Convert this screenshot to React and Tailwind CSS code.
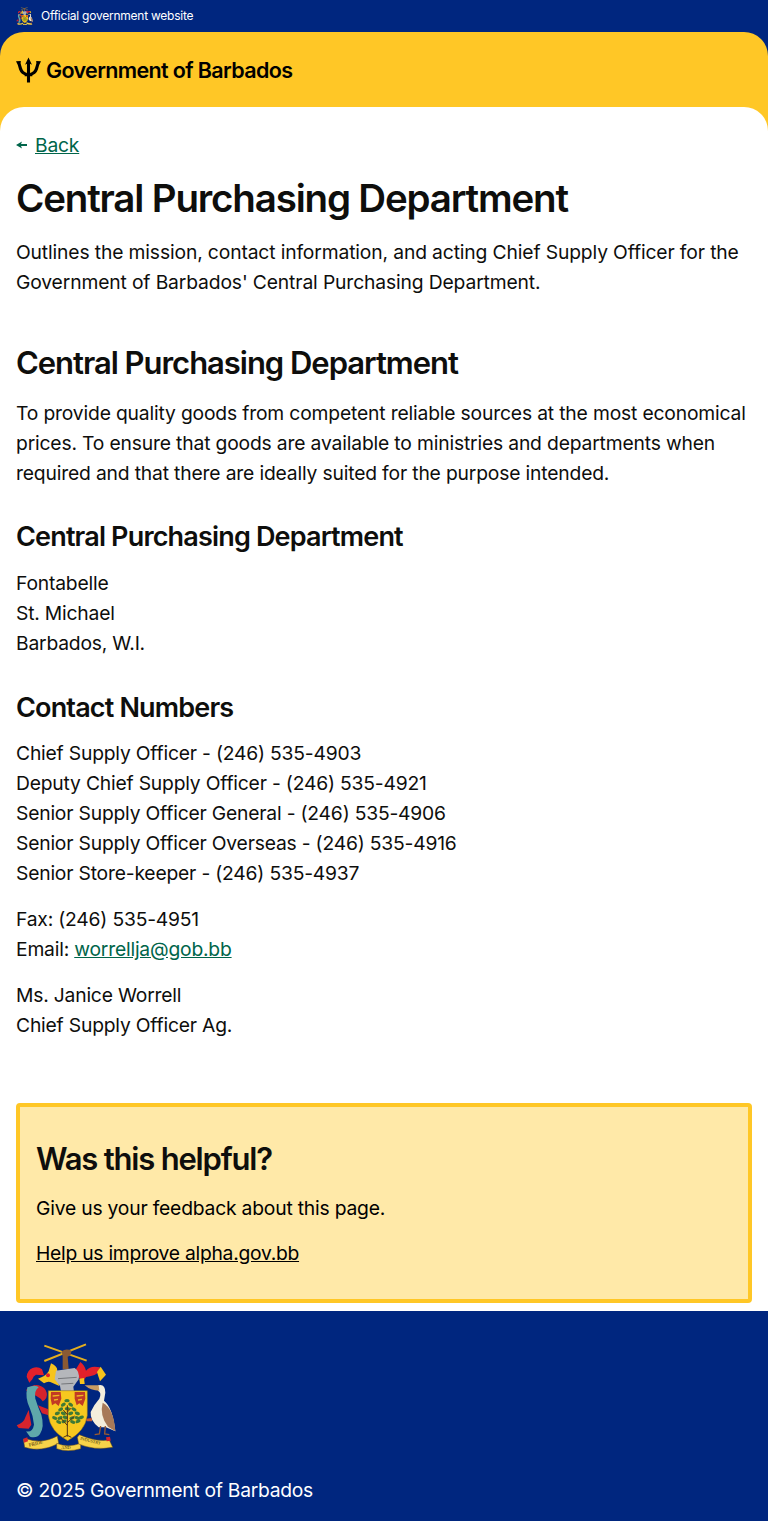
import React from 'react';

const font = "font-['Inter','Noto_Sans',sans-serif]";

// leaf clusters of the fig tree on the shield
const leaves = [
    [203, 212, 0], [192, 224, -35], [214, 224, 35], [184, 238, -30], [204, 236, 0], [224, 238, 30],
    [174, 250, -20], [192, 250, 20], [214, 250, -20], [234, 250, 20], [166, 264, 20], [182, 264, -20],
    [198, 262, 15], [218, 264, -15], [234, 264, 20], [246, 262, -20], [178, 276, 25], [194, 274, -20],
    [220, 276, 20], [236, 274, -25],
];

// coat of arms, coordinates are from a 3x crop of the crest
const CoatOfArms = ({ className, labels }) => (
    <svg viewBox="50 40 300 322" className={className} aria-hidden="true">
        {/* crossed canes */}
        <path d="M135 47 L262 92 M260 43 L135 93" stroke="#e3ae1f" strokeWidth="6" fill="none" />
        {/* arm and fist */}
        <path d="M187 64 Q200 54 216 62 L214 76 L205 80 L208 118 L190 118 L190 80 Z" fill="#8a5a34" />
        {/* mantling left */}
        <path d="M82 140 Q84 120 100 114 Q116 108 128 118 L134 136 L110 134 Q102 138 99 148 L90 158 Z" fill="#e3212b" />
        <path d="M116 146 Q138 140 148 124 L155 100 Q174 108 174 122 L170 138 L174 150 L180 168 L158 158 Q146 152 134 160 Z" fill="#f7c41d" />
        <circle cx="146" cy="136" r="6" fill="#e3212b" />
        {/* mantling right */}
        <path d="M226 124 L243 96 Q256 106 260 122 Q270 110 286 110 L302 112 L296 128 Q284 138 272 139 L260 141 L252 154 L236 142 Z" fill="#e3212b" />
        <path d="M293 126 L304 110 L320 134 L302 154 L296 136 Z" fill="#f7c41d" />
        <path d="M240 146 L254 144 L256 162 L242 162 Z" fill="#f7c41d" />
        {/* helmet */}
        <path d="M170 122 L226 114 Q242 124 238 148 L222 170 L224 186 L186 190 L182 168 L166 148 Z" fill="#b5b7bb" />
        <path d="M176 146 L232 142 M186 162 L222 160" stroke="#74767a" strokeWidth="3" fill="none" />
        {/* dolphin */}
        <path d="M80 180 Q100 162 118 166 Q138 172 142 188 Q146 204 130 214 L124 206 Q112 196 92 192 Z" fill="#d5242d" />
        <path d="M84 172 Q110 162 118 172 Q104 182 108 206 Q116 232 126 254 Q136 290 122 312 Q112 326 92 320 L80 304 Q100 308 104 284 Q102 258 92 236 Q76 206 84 172 Z" fill="#5fa8aa" />
        <path d="M116 226 L147 238 L148 256 L128 250 Z" fill="#d5242d" />
        <path d="M52 286 Q74 278 78 262 L88 240 Q92 262 96 284 L88 296 L58 294 Z" fill="#d5242d" />
        {/* shield */}
        <path d="M147 182 L264 182 L264 256 Q258 304 205 332 Q152 304 147 256 Z" fill="#f7c81f" stroke="#8a6a1a" strokeWidth="1.5" />
        {/* pride of barbados flowers */}
        <path d="M155 186 L184 186 L186 206 L178 228 L168 220 L158 226 L154 206 Z" fill="#c23a24" />
        <path d="M226 186 L257 186 L258 206 L250 228 L240 220 L232 226 L226 206 Z" fill="#c23a24" />
        <path d="M160 198 L180 196 M164 210 L176 208 M232 198 L252 196 M236 210 L248 208" stroke="#f0b722" strokeWidth="4" fill="none" />
        {/* fig tree */}
        <g fill="#3f7a35">
            {leaves.map(([cx, cy, r]) => (
                <ellipse key={`${cx}-${cy}`} cx={cx} cy={cy} rx="8" ry="5" transform={`rotate(${r} ${cx} ${cy})`} />
            ))}
        </g>
        <path d="M204 320 L204 226 M204 286 L184 264 M204 278 L226 258 M204 254 L192 240 M204 246 L216 234 M204 316 L192 322 M204 316 L216 322" stroke="#4f3218" strokeWidth="3" fill="none" />
        {/* pelican */}
        <path d="M296 166 Q318 160 318 188 L314 212 Q340 232 348 304 L320 292 L298 292 Q272 272 274 246 Q282 226 300 206 Q308 188 296 182 Z" fill="#f4eedc" />
        <path d="M298 166 L256 166 Q274 182 300 182 Z" fill="#c99b62" />
        <path d="M310 218 Q344 236 348 304 L326 290 Q300 256 310 218 Z" fill="#a77958" />
        <path d="M260 266 L278 264 L278 274 L262 274 Z" fill="#bd5a3a" />
        <path d="M304 288 L300 312 L286 314 M318 288 L316 312 L330 314" stroke="#9a5a30" strokeWidth="4" fill="none" />
        {/* motto scrolls */}
        <path d="M72 328 L80 326 Q128 344 174 318 L178 340 Q126 368 76 352 Z" fill="#f7d34a" stroke="#6b4d12" strokeWidth="1.5" />
        <path d="M72 326 L84 322 L86 334 L74 338 Z" fill="#d5242d" />
        <path d="M172 340 Q205 354 244 340 L244 356 Q205 368 172 356 Z" fill="#f7d34a" stroke="#6b4d12" strokeWidth="1.5" />
        <path d="M234 322 L240 314 Q290 336 330 330 L340 352 Q284 362 238 342 Z" fill="#f7d34a" stroke="#6b4d12" strokeWidth="1.5" />
        <path d="M320 322 L332 320 L334 332 L322 334 Z" fill="#d5242d" />
        {labels && (
            <g fontFamily="'Liberation Serif', serif" fontSize="15" fill="#3a2a08">
                <text x="90" y="350" transform="rotate(-14 90 350)">PRIDE</text>
                <text x="186" y="357" fontSize="13">AND</text>
                <text x="242" y="329" fontSize="13" transform="rotate(14 242 329)">INDUSTRY</text>
            </g>
        )}
    </svg>
);

const Trident = () => (
    <svg viewBox="0 0 26 26" className="w-[25px] h-[26px]" aria-hidden="true">
        <path d="M13 0 L16.6 7.5 L14.6 6.6 L14.6 17.5 L17 17.5 L17 19.5 L14.6 19.5 L14.6 26 L11.4 26 L11.4 19.5 L9 19.5 L9 17.5 L11.4 17.5 L11.4 6.6 L9.4 7.5 Z" fill="#000" />
        <path d="M0 4 L5 3.6 L4.8 6 Q5.2 8 6.2 11 Q7.4 15 11.4 16 L11.4 19 Q5 18 3.2 12.5 Q2.4 8 0 4 Z" fill="#000" />
        <path d="M26 4 L21 3.6 L21.2 6 Q20.8 8 19.8 11 Q18.6 15 14.6 16 L14.6 19 Q21 18 22.8 12.5 Q23.6 8 26 4 Z" fill="#000" />
    </svg>
);

const BackArrow = () => (
    <svg viewBox="0 0 11 8" className="w-[11px] h-2 shrink-0" aria-hidden="true">
        <path d="M0 4 L6 0.5 L5 3 L11 3 L11 5 L5 5 L6 7.5 Z" fill="#00654a" />
    </svg>
);

const H3 = ({ children }) => (
    <h3 className="text-[27px] leading-[34px] font-semibold tracking-[-0.83px] text-[#0e0e0c]">{children}</h3>
);

const App = () => {
    return (
        <div className={`${font} w-full bg-[#00267f] text-[19.3px] leading-[30px] tracking-[-0.2px] text-[#0e0e0c]`}>
            {/* Official banner */}
            <div className="h-8 flex items-center gap-2 px-4 text-white text-[12px] leading-4 tracking-[-0.24px]">
                <CoatOfArms className="w-[17px] h-[18px]" />
                <span>Official government website</span>
            </div>

            {/* Header */}
            <div className="bg-[#ffc726] rounded-t-3xl">
                <div className="h-[75px] flex items-center gap-[5px] px-4">
                    <Trident />
                    <span className="text-[21.5px] font-semibold tracking-[-0.64px] text-black">Government of Barbados</span>
                </div>

                <main className="bg-white rounded-t-3xl px-4 pt-[23px]">
                    <a href="#" className="flex items-center gap-2 text-[#00654a]">
                        <BackArrow />
                        <span className="underline">Back</span>
                    </a>

                    <h1 className="mt-[14px] text-[38.5px] leading-[48px] font-semibold tracking-[-1.17px]">Central Purchasing Department</h1>
                    <p className="mt-[15px] tracking-[-0.14px]">
                        Outlines the mission, contact information, and acting Chief Supply Officer for the Government of Barbados' Central Purchasing Department.
                    </p>

                    <h2 className="mt-[46px] text-[31px] leading-[40px] font-semibold tracking-[-1.03px]">Central Purchasing Department</h2>
                    <p className="mt-[15px] tracking-[-0.17px]">
                        To provide quality goods from competent reliable sources at the most economical prices. To ensure that goods are available to ministries and departments when required and that there are ideally suited for the purpose intended.
                    </p>

                    <div className="mt-8"><H3>Central Purchasing Department</H3></div>
                    <p className="mt-[14px]">Fontabelle<br />St. Michael<br />Barbados, W.I.</p>

                    <div className="mt-[33px]"><H3>Contact Numbers</H3></div>
                    <p className="mt-[13px]">
                        Chief Supply Officer - (246) 535-4903<br />
                        Deputy Chief Supply Officer - (246) 535-4921<br />
                        Senior Supply Officer General - (246) 535-4906<br />
                        Senior Supply Officer Overseas - (246) 535-4916<br />
                        Senior Store-keeper - (246) 535-4937
                    </p>
                    <p className="mt-4">Fax: (246) 535-4951<br />Email: <a href="#" className="text-[#00654a] underline">worrellja@gob.bb</a></p>
                    <p className="mt-4">Ms. Janice Worrell<br />Chief Supply Officer Ag.</p>

                    {/* Feedback */}
                    <div className="mt-[63px] border-4 border-[#ffc726] rounded-[4px] bg-[#ffe9a8] px-4 pt-8 pb-[31px] text-black">
                        <h2 className="text-[31px] leading-[40px] font-semibold tracking-[-1.2px] text-[#0e0e0c]">Was this helpful?</h2>
                        <p className="mt-[14px]">Give us your feedback about this page.</p>
                        <a href="#" className="block mt-[15px] underline tracking-[-0.26px]">Help us improve alpha.gov.bb</a>
                    </div>
                    <div className="h-2" />
                </main>
            </div>

            {/* Footer */}
            <footer className="bg-[#00267f] text-white px-4 pt-8 pb-4">
                <CoatOfArms className="w-[100px] h-[108px]" labels />
                <p className="mt-6 tracking-[-0.27px]">© 2025 Government of Barbados</p>
            </footer>
        </div>
    );
};

export default App;
